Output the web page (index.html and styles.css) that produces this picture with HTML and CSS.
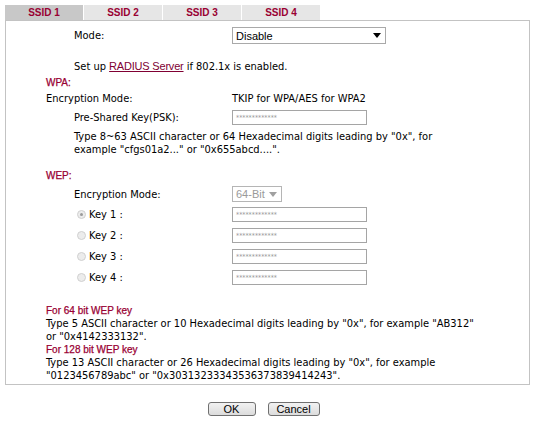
FILE: index.html
```html
<!DOCTYPE html>
<html lang="en">
<head>
  <meta charset="UTF-8">
  <title>Wireless Security</title>
  <link rel="stylesheet" href="styles.css">
</head>
<body>
  <div class="tabs">
    <div class="tab active">SSID 1</div>
    <div class="tab">SSID 2</div>
    <div class="tab">SSID 3</div>
    <div class="tab">SSID 4</div>
  </div>
  <div class="panel">
    <div class="row lvl2 r-mode">
      <span class="lbl">Mode:</span>
      <div class="select wide"><span>Disable</span><i class="arrow"></i></div>
    </div>
    <div class="row lvl2 r-setup">
      <span>Set up <a href="#">RADIUS Server</a> if 802.1x is enabled.</span>
    </div>
    <div class="row lvl1 r-wpa"><span class="head">WPA:</span></div>
    <div class="row lvl1 r-enc">
      <span class="lbl">Encryption Mode:</span>
      <span>TKIP for WPA/AES for WPA2</span>
    </div>
    <div class="row lvl2 r-psk">
      <span class="lbl">Pre-Shared Key(PSK):</span>
      <div class="input">*************</div>
    </div>
    <div class="note lvl2 r-note1">Type 8~63 ASCII character or 64 Hexadecimal digits leading by "0x", for<br>example "cfgs01a2..." or "0x655abcd....".</div>

    <div class="row lvl1 r-wep"><span class="head">WEP:</span></div>
    <div class="row lvl2 r-enc2">
      <span class="lbl">Encryption Mode:</span>
      <div class="select small disabled"><span>64-Bit</span><i class="arrow"></i></div>
    </div>
    <div class="row lvl2 key r-key1">
      <span class="lbl"><i class="radio checked"></i>Key 1 :</span>
      <div class="input">*************</div>
    </div>
    <div class="row lvl2 key r-key">
      <span class="lbl"><i class="radio"></i>Key 2 :</span>
      <div class="input">*************</div>
    </div>
    <div class="row lvl2 key r-key">
      <span class="lbl"><i class="radio"></i>Key 3 :</span>
      <div class="input">*************</div>
    </div>
    <div class="row lvl2 key r-key">
      <span class="lbl"><i class="radio"></i>Key 4 :</span>
      <div class="input">*************</div>
    </div>

    <div class="row lvl1 r-for64"><span class="head">For 64 bit WEP key</span></div>
    <div class="note lvl1">Type 5 ASCII character or 10 Hexadecimal digits leading by "0x", for example "AB312"<br>or "0x4142333132".</div>
    <div class="row lvl1 r-for128"><span class="head">For 128 bit WEP key</span></div>
    <div class="note lvl1">Type 13 ASCII character or 26 Hexadecimal digits leading by "0x", for example<br>"0123456789abc" or "0x30313233343536373839414243".</div>
  </div>
  <div class="buttons">
    <button class="btn ok">OK</button>
    <button class="btn cancel">Cancel</button>
  </div>
</body>
</html>
```

FILE: styles.css
```css
body { margin: 0; padding: 5px 0 0 5px; background: #fff; color: #000; font-family: "DejaVu Sans Condensed", "DejaVu Sans", Verdana, sans-serif; font-stretch: condensed; font-size: 11px; width: 525px; }
.tabs { display: flex; height: 15px; }
.tab { width: 78px; height: 15px; margin-right: 1px; background: #e6e6e6; color: #990033; font-family: "Liberation Sans", Arial, sans-serif; font-weight: bold; font-size: 10px; display: flex; align-items: center; justify-content: center; }
.tab.active { background: #c8c8c8; }
.panel { border: 1px solid #c3c3c3; padding-top: 6px; box-sizing: border-box; height: 365px; display: flex; flex-direction: column; }
.row { display: flex; align-items: center; height: 14px; }
.lvl1 { padding-left: 40px; }
.lvl2 { padding-left: 68px; }
.lvl1 .lbl { width: 186px; }
.lvl2 .lbl { width: 158px; }
.head { color: #990033; font-family: "Liberation Sans", Arial, sans-serif; font-size: 10px; -webkit-text-stroke: 0.25px #990033; }
.r-mode { height: 17px; }
.r-setup { margin-top: 15px; }
.r-wpa { margin-top: 2px; }
.r-enc { margin-top: 2px; }
.r-psk { margin-top: 5px; height: 15px; }
.note { line-height: 13px; }
.r-note1 { margin-top: 5px; }
.r-wep { margin-top: 12px; }
.r-enc2 { margin-top: 4px; height: 16px; }
.key { height: 15px; }
.r-key1 { margin-top: 5px; }
.r-key { margin-top: 6px; }
.r-for64 { margin-top: 19px; height: 13px; }
.r-for128 { height: 13px; }
a { color: #800033; font-family: "Liberation Sans", Arial, sans-serif; font-size: 11px; letter-spacing: -0.2px; }
.select { border: 1px solid #a9a9a9; box-sizing: border-box; height: 17px; display: flex; align-items: center; justify-content: space-between; padding: 0 4px 0 3px; font-family: "Liberation Sans", Arial, sans-serif; font-size: 11px; background: #fff; }
.select.wide { width: 154px; }
.select.small { width: 50px; height: 16px; }
.arrow { width: 0; height: 0; border-left: 4px solid transparent; border-right: 4px solid transparent; border-top: 5px solid #000; }
.select.disabled { color: #9a9a9a; border-color: #b5b5b5; }
.select.disabled .arrow { border-top-color: #a0a0a0; }
.input { width: 135px; height: 15px; box-sizing: border-box; border: 1px solid #a5a5a5; font-family: "DejaVu Sans", sans-serif; font-size: 7px; color: #999; padding: 3px 0 0 3px; line-height: 8px; }
.radio { display: inline-block; width: 9px; height: 9px; border-radius: 50%; border: 1px solid #d0d0d0; box-sizing: border-box; background: #ececec; margin: 0 3px 0 3px; vertical-align: -1px; position: relative; }
.radio.checked::after { content: ""; position: absolute; left: 2px; top: 2px; width: 3px; height: 3px; border-radius: 50%; background: #9a9a9a; }
.buttons { display: flex; justify-content: center; gap: 12px; padding-right: 8px; margin-top: 17px; }
.btn { height: 14px; padding: 0; border: 1px solid #707070; border-radius: 3px; background: linear-gradient(#f2f2f2, #dcdcdc); font-family: "Liberation Sans", Arial, sans-serif; font-size: 11px; color: #000; line-height: 12px; }
.btn.ok { width: 48px; }
.btn.cancel { width: 52px; }
```
